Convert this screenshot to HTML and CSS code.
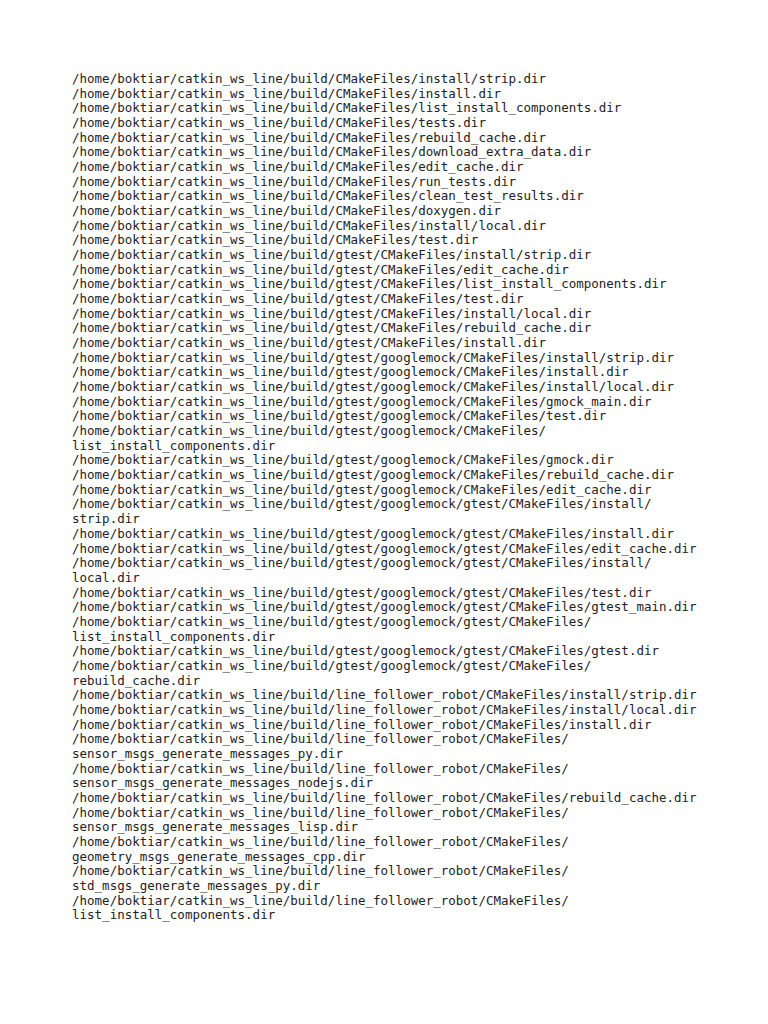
FILE: index.html
```html
<!DOCTYPE html>
<html>
<head>
<meta charset="utf-8">
<link rel="stylesheet" href="styles.css">
</head>
<body>
<main class="page">
<pre class="listing">/home/boktiar/catkin_ws_line/build/CMakeFiles/install/strip.dir
/home/boktiar/catkin_ws_line/build/CMakeFiles/install.dir
/home/boktiar/catkin_ws_line/build/CMakeFiles/list_install_components.dir
/home/boktiar/catkin_ws_line/build/CMakeFiles/tests.dir
/home/boktiar/catkin_ws_line/build/CMakeFiles/rebuild_cache.dir
/home/boktiar/catkin_ws_line/build/CMakeFiles/download_extra_data.dir
/home/boktiar/catkin_ws_line/build/CMakeFiles/edit_cache.dir
/home/boktiar/catkin_ws_line/build/CMakeFiles/run_tests.dir
/home/boktiar/catkin_ws_line/build/CMakeFiles/clean_test_results.dir
/home/boktiar/catkin_ws_line/build/CMakeFiles/doxygen.dir
/home/boktiar/catkin_ws_line/build/CMakeFiles/install/local.dir
/home/boktiar/catkin_ws_line/build/CMakeFiles/test.dir
/home/boktiar/catkin_ws_line/build/gtest/CMakeFiles/install/strip.dir
/home/boktiar/catkin_ws_line/build/gtest/CMakeFiles/edit_cache.dir
/home/boktiar/catkin_ws_line/build/gtest/CMakeFiles/list_install_components.dir
/home/boktiar/catkin_ws_line/build/gtest/CMakeFiles/test.dir
/home/boktiar/catkin_ws_line/build/gtest/CMakeFiles/install/local.dir
/home/boktiar/catkin_ws_line/build/gtest/CMakeFiles/rebuild_cache.dir
/home/boktiar/catkin_ws_line/build/gtest/CMakeFiles/install.dir
/home/boktiar/catkin_ws_line/build/gtest/googlemock/CMakeFiles/install/strip.dir
/home/boktiar/catkin_ws_line/build/gtest/googlemock/CMakeFiles/install.dir
/home/boktiar/catkin_ws_line/build/gtest/googlemock/CMakeFiles/install/local.dir
/home/boktiar/catkin_ws_line/build/gtest/googlemock/CMakeFiles/gmock_main.dir
/home/boktiar/catkin_ws_line/build/gtest/googlemock/CMakeFiles/test.dir
/home/boktiar/catkin_ws_line/build/gtest/googlemock/CMakeFiles/
list_install_components.dir
/home/boktiar/catkin_ws_line/build/gtest/googlemock/CMakeFiles/gmock.dir
/home/boktiar/catkin_ws_line/build/gtest/googlemock/CMakeFiles/rebuild_cache.dir
/home/boktiar/catkin_ws_line/build/gtest/googlemock/CMakeFiles/edit_cache.dir
/home/boktiar/catkin_ws_line/build/gtest/googlemock/gtest/CMakeFiles/install/
strip.dir
/home/boktiar/catkin_ws_line/build/gtest/googlemock/gtest/CMakeFiles/install.dir
/home/boktiar/catkin_ws_line/build/gtest/googlemock/gtest/CMakeFiles/edit_cache.dir
/home/boktiar/catkin_ws_line/build/gtest/googlemock/gtest/CMakeFiles/install/
local.dir
/home/boktiar/catkin_ws_line/build/gtest/googlemock/gtest/CMakeFiles/test.dir
/home/boktiar/catkin_ws_line/build/gtest/googlemock/gtest/CMakeFiles/gtest_main.dir
/home/boktiar/catkin_ws_line/build/gtest/googlemock/gtest/CMakeFiles/
list_install_components.dir
/home/boktiar/catkin_ws_line/build/gtest/googlemock/gtest/CMakeFiles/gtest.dir
/home/boktiar/catkin_ws_line/build/gtest/googlemock/gtest/CMakeFiles/
rebuild_cache.dir
/home/boktiar/catkin_ws_line/build/line_follower_robot/CMakeFiles/install/strip.dir
/home/boktiar/catkin_ws_line/build/line_follower_robot/CMakeFiles/install/local.dir
/home/boktiar/catkin_ws_line/build/line_follower_robot/CMakeFiles/install.dir
/home/boktiar/catkin_ws_line/build/line_follower_robot/CMakeFiles/
sensor_msgs_generate_messages_py.dir
/home/boktiar/catkin_ws_line/build/line_follower_robot/CMakeFiles/
sensor_msgs_generate_messages_nodejs.dir
/home/boktiar/catkin_ws_line/build/line_follower_robot/CMakeFiles/rebuild_cache.dir
/home/boktiar/catkin_ws_line/build/line_follower_robot/CMakeFiles/
sensor_msgs_generate_messages_lisp.dir
/home/boktiar/catkin_ws_line/build/line_follower_robot/CMakeFiles/
geometry_msgs_generate_messages_cpp.dir
/home/boktiar/catkin_ws_line/build/line_follower_robot/CMakeFiles/
std_msgs_generate_messages_py.dir
/home/boktiar/catkin_ws_line/build/line_follower_robot/CMakeFiles/
list_install_components.dir</pre>
</main>
</body>
</html>
```

FILE: styles.css
```css
html, body {
  margin: 0;
  padding: 0;
  background: #ffffff;
}
.page {
  padding: 72px 0 0 72px;
}
.listing {
  margin: 0;
  font-family: "DejaVu Sans Mono", monospace;
  font-size: 12.5px;
  line-height: 14.67px;
  color: #222222;
  white-space: pre;
}
```
